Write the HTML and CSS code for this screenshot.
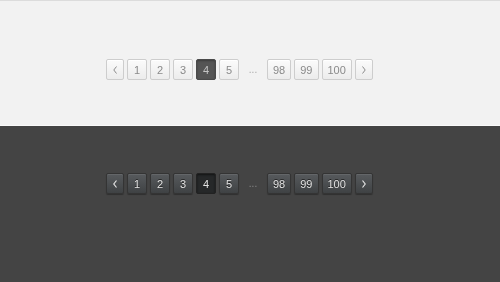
FILE: index.html
```html
<!DOCTYPE html>
<html lang="en">
<head>
  <meta charset="UTF-8">
  <title>Pagination</title>
  <link rel="stylesheet" href="styles.css">
</head>
<body>

  <section class="zone light">
    <div class="pagination">
      <a class="page arrow" href="#"><svg width="4" height="8" viewBox="0 0 4 8"><polyline points="3.5,0.5 0.8,4 3.5,7.5" fill="none" stroke="currentColor" stroke-width="1"/></svg></a>
      <a class="page" href="#">1</a>
      <a class="page" href="#">2</a>
      <a class="page" href="#">3</a>
      <a class="page active" href="#">4</a>
      <a class="page" href="#">5</a>
      <span class="dots">...</span>
      <a class="page" href="#">98</a>
      <a class="page" href="#">99</a>
      <a class="page" href="#">100</a>
      <a class="page arrow" href="#"><svg width="4" height="8" viewBox="0 0 4 8"><polyline points="0.5,0.5 3.2,4 0.5,7.5" fill="none" stroke="currentColor" stroke-width="1"/></svg></a>
    </div>
  </section>

  <section class="zone dark">
    <div class="pagination">
      <a class="page arrow" href="#"><svg width="4" height="8" viewBox="0 0 4 8"><polyline points="3.5,0.5 0.8,4 3.5,7.5" fill="none" stroke="currentColor" stroke-width="1.2"/></svg></a>
      <a class="page" href="#">1</a>
      <a class="page" href="#">2</a>
      <a class="page" href="#">3</a>
      <a class="page active" href="#">4</a>
      <a class="page" href="#">5</a>
      <span class="dots">...</span>
      <a class="page" href="#">98</a>
      <a class="page" href="#">99</a>
      <a class="page" href="#">100</a>
      <a class="page arrow" href="#"><svg width="4" height="8" viewBox="0 0 4 8"><polyline points="0.5,0.5 3.2,4 0.5,7.5" fill="none" stroke="currentColor" stroke-width="1.2"/></svg></a>
    </div>
  </section>

</body>
</html>
```

FILE: styles.css
```css
body {
  font-family: "Liberation Sans", Arial, sans-serif;
  margin: 0;
  height: 282px;
  overflow: hidden;
}
.zone {
  box-sizing: border-box;
}
.light {
  height: 126px;
  background-color: #f2f2f2;
  border-top: 1px solid #dcdcdc;
  border-bottom: 1px solid #fafafa;
  padding-top: 58px;
}
.dark {
  height: 156px;
  background-color: #444;
  padding-top: 47px;
}
.pagination {
  display: flex;
  align-items: center;
  gap: 3px;
  padding-left: 106px;
  will-change: transform;
}
.page {
  box-sizing: border-box;
  display: flex;
  align-items: center;
  justify-content: center;
  min-width: 20px;
  height: 21px;
  padding: 0 5px;
  border-radius: 2px;
  font-size: 11px;
  text-decoration: none;
}
.page.arrow {
  min-width: 18px;
  width: 18px;
  padding: 0;
}
.dots {
  width: 22px;
  text-align: center;
  font-size: 10px;
}

.light .page {
  color: #8a8a8a;
  background: linear-gradient(#fbfbfb, #ececec);
  border: 1px solid #cdcdcd;
  box-shadow: inset 0 1px 0 #fff;
}
.light .page.active {
  color: #c4c4c4;
  background: #555;
  border-color: #4a4a4a;
  box-shadow: inset 0 1px 2px rgba(0,0,0,0.3);
}
.light .dots {
  color: #aaa;
}

.dark .page {
  color: #e2e2e2;
  background: linear-gradient(#575a5d, #3f4244);
  border: 1px solid #343434;
  box-shadow: inset 0 1px 0 rgba(255,255,255,0.08), 0 1px 1px rgba(0,0,0,0.3);
  text-shadow: 0 -1px 0 #222;
}
.dark .page.active {
  background: #262829;
  border-color: #222;
  box-shadow: inset 0 1px 2px rgba(0,0,0,0.5);
}
.dark .dots {
  color: #888;
}
```
